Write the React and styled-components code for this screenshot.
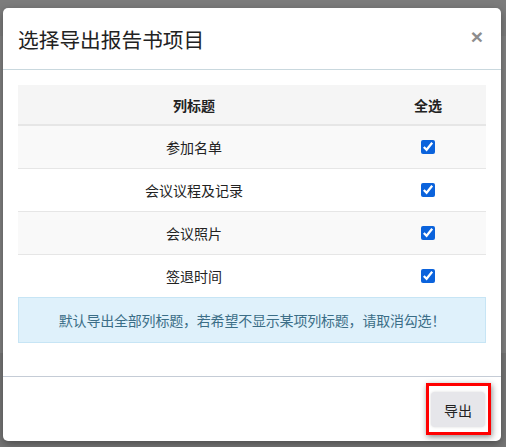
import styled, { createGlobalStyle } from "styled-components";

const GlobalStyle = createGlobalStyle`
	html, body {
		margin: 0;
		padding: 0;
	}
	body {
		font-family: "Noto Sans CJK SC", "Noto Sans", sans-serif;
		background: #7f7f7f;
	}
`;

const Backdrop = styled.div`
	width: 506px;
	height: 447px;
	box-sizing: border-box;
	padding: 8px 5px 0 3px;
	background: linear-gradient(
		to bottom,
		#7c7c7c 0,
		#7c7c7c 36px,
		#818181 36px,
		#818181 353px,
		#767676 353px
	);
	overflow: hidden;
`;

const Modal = styled.div`
	width: 498px;
	background: #fff;
	border-radius: 5px;
	box-shadow: 0 3px 9px rgba(0, 0, 0, 0.35);
	overflow: hidden;
`;

const Header = styled.div`
	height: 62px;
	box-sizing: border-box;
	padding: 0 18px 0 15px;
	display: flex;
	align-items: center;
	justify-content: space-between;
	border-bottom: 1px solid #c9d8de;
`;

const Title = styled.h4`
	margin: 0;
	font-size: 20.7px;
	font-weight: 400;
	color: #222;
	padding-top: 1px;
`;

const Close = styled.span`
	font-family: "Liberation Sans", Arial, sans-serif;
	font-size: 21px;
	font-weight: 700;
	color: #8d8d8d;
	line-height: 1;
	margin-top: -5px;
`;

const Body = styled.div`
	padding: 15px 15px 33px;
`;

const Table = styled.table`
	width: 100%;
	border-collapse: collapse;
	font-size: 14px;
	color: #222;
`;

const HeadCell = styled.th`
	height: 39px;
	padding: 0;
	background: #f5f5f5;
	font-weight: 700;
	text-align: center;
	border-bottom: 2px solid #e6e6e6;
	width: ${(p) => p.$width || "auto"};
`;

const Row = styled.tr`
	background: ${(p) => (p.$striped ? "#f9f9f9" : "#fff")};
	border-bottom: 1px solid #e6e6e6;
	&:last-child {
		border-bottom: none;
	}
`;

const Cell = styled.td`
	height: 42px;
	padding: 0;
	text-align: center;
	vertical-align: middle;
`;

const Check = styled.input`
	width: 14px;
	height: 14px;
	margin: 3px 0 0;
	accent-color: #0b63dc;
`;

const Alert = styled.div`
	height: 46px;
	box-sizing: border-box;
	display: flex;
	align-items: center;
	justify-content: center;
	background: #dff1fb;
	border: 1px solid #c7e5f5;
	color: #3b6e87;
	font-size: 14px;
	letter-spacing: -0.2px;
`;

const Footer = styled.div`
	height: 65px;
	box-sizing: border-box;
	border-top: 1px solid #c5ccd6;
	display: flex;
	align-items: flex-start;
	justify-content: flex-end;
	padding: 6px 10px 0 0;
`;

const Highlight = styled.span`
	display: inline-flex;
	border: 3px solid #ff0000;
	padding: 6px 3px 5px 2px;
	box-shadow: 1px 2px 6px rgba(0, 0, 0, 0.45);
`;

const Button = styled.button`
	width: 54px;
	height: 35px;
	border: none;
	border-radius: 4px;
	background: #e6e6ea;
	box-shadow: 0 0 3px rgba(0, 0, 0, 0.15);
	font-family: inherit;
	font-size: 14px;
	color: #222;
	padding: 0;
`;

const items = ["参加名单", "会议议程及记录", "会议照片", "签退时间"];

const App = () => {
	return (
		<>
			<GlobalStyle />
			<Backdrop>
				<Modal>
					<Header>
						<Title>选择导出报告书项目</Title>
						<Close>×</Close>
					</Header>

					<Body>
						<Table>
							<thead>
								<tr>
									<HeadCell>列标题</HeadCell>
									<HeadCell $width='116px'>全选</HeadCell>
								</tr>
							</thead>
							<tbody>
								{items.map((item, i) => (
									<Row key={item} $striped={i % 2 === 0}>
										<Cell>{item}</Cell>
										<Cell>
											<Check type='checkbox' defaultChecked />
										</Cell>
									</Row>
								))}
							</tbody>
						</Table>
						<Alert>默认导出全部列标题，若希望不显示某项列标题，请取消勾选！</Alert>
					</Body>

					<Footer>
						<Highlight>
							<Button>导出</Button>
						</Highlight>
					</Footer>
				</Modal>
			</Backdrop>
		</>
	);
};

export default App;
